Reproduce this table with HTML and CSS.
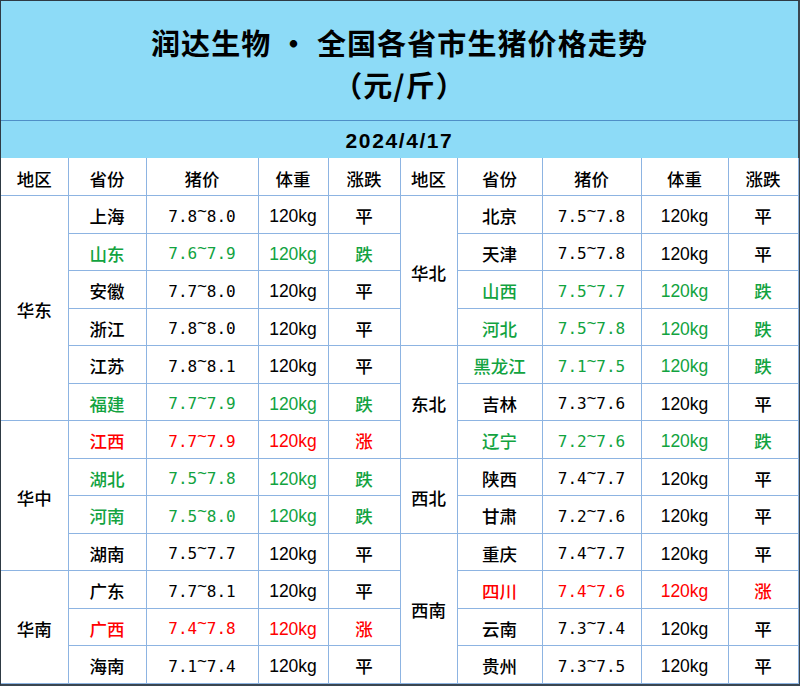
FILE: index.html
```html
<!DOCTYPE html>
<html lang="zh-CN">
<head>
<meta charset="utf-8">
<title>润达生物 · 全国各省市生猪价格走势</title>
<link rel="stylesheet" href="styles.css">
</head>
<body>
<div class="frame">
  <div class="title">
    <div class="t1">润达生物 · 全国各省市生猪价格走势</div>
    <div class="t2">（元/斤）</div>
  </div>
  <div class="date">2024/4/17</div>
  <table class="grid">
    <colgroup>
      <col class="c-reg"><col class="c-prov"><col class="c-price"><col class="c-wt"><col class="c-chg">
      <col class="c-reg2"><col class="c-prov2"><col class="c-price2"><col class="c-wt2"><col class="c-chg2">
    </colgroup>
    <thead>
      <tr>
        <th>地区</th><th>省份</th><th>猪价</th><th>体重</th><th>涨跌</th>
        <th>地区</th><th>省份</th><th>猪价</th><th>体重</th><th>涨跌</th>
      </tr>
    </thead>
    <tbody>
      <tr>
        <td class="reg" rowspan="6">华东</td>
        <td>上海</td><td class="num">7.8<span class="tl">~</span>8.0</td><td class="kg">120kg</td><td>平</td>
        <td class="reg" rowspan="4">华北</td>
        <td>北京</td><td class="num">7.5<span class="tl">~</span>7.8</td><td class="kg">120kg</td><td class="last">平</td>
      </tr>
      <tr>
        <td class="g">山东</td><td class="num g">7.6<span class="tl">~</span>7.9</td><td class="kg g">120kg</td><td class="g">跌</td>
        <td>天津</td><td class="num">7.5<span class="tl">~</span>7.8</td><td class="kg">120kg</td><td class="last">平</td>
      </tr>
      <tr>
        <td>安徽</td><td class="num">7.7<span class="tl">~</span>8.0</td><td class="kg">120kg</td><td>平</td>
        <td class="g">山西</td><td class="num g">7.5<span class="tl">~</span>7.7</td><td class="kg g">120kg</td><td class="g last">跌</td>
      </tr>
      <tr>
        <td>浙江</td><td class="num">7.8<span class="tl">~</span>8.0</td><td class="kg">120kg</td><td>平</td>
        <td class="g">河北</td><td class="num g">7.5<span class="tl">~</span>7.8</td><td class="kg g">120kg</td><td class="g last">跌</td>
      </tr>
      <tr>
        <td>江苏</td><td class="num">7.8<span class="tl">~</span>8.1</td><td class="kg">120kg</td><td>平</td>
        <td class="reg" rowspan="3">东北</td>
        <td class="g">黑龙江</td><td class="num g">7.1<span class="tl">~</span>7.5</td><td class="kg g">120kg</td><td class="g last">跌</td>
      </tr>
      <tr>
        <td class="g">福建</td><td class="num g">7.7<span class="tl">~</span>7.9</td><td class="kg g">120kg</td><td class="g">跌</td>
        <td>吉林</td><td class="num">7.3<span class="tl">~</span>7.6</td><td class="kg">120kg</td><td class="last">平</td>
      </tr>
      <tr>
        <td class="reg" rowspan="4">华中</td>
        <td class="r">江西</td><td class="num r">7.7<span class="tl">~</span>7.9</td><td class="kg r">120kg</td><td class="r">涨</td>
        <td class="g">辽宁</td><td class="num g">7.2<span class="tl">~</span>7.6</td><td class="kg g">120kg</td><td class="g last">跌</td>
      </tr>
      <tr>
        <td class="g">湖北</td><td class="num g">7.5<span class="tl">~</span>7.8</td><td class="kg g">120kg</td><td class="g">跌</td>
        <td class="reg" rowspan="2">西北</td>
        <td>陕西</td><td class="num">7.4<span class="tl">~</span>7.7</td><td class="kg">120kg</td><td class="last">平</td>
      </tr>
      <tr>
        <td class="g">河南</td><td class="num g">7.5<span class="tl">~</span>8.0</td><td class="kg g">120kg</td><td class="g">跌</td>
        <td>甘肃</td><td class="num">7.2<span class="tl">~</span>7.6</td><td class="kg">120kg</td><td class="last">平</td>
      </tr>
      <tr>
        <td>湖南</td><td class="num">7.5<span class="tl">~</span>7.7</td><td class="kg">120kg</td><td>平</td>
        <td class="reg" rowspan="4">西南</td>
        <td>重庆</td><td class="num">7.4<span class="tl">~</span>7.7</td><td class="kg">120kg</td><td class="last">平</td>
      </tr>
      <tr>
        <td class="reg" rowspan="3">华南</td>
        <td>广东</td><td class="num">7.7<span class="tl">~</span>8.1</td><td class="kg">120kg</td><td>平</td>
        <td class="r">四川</td><td class="num r">7.4<span class="tl">~</span>7.6</td><td class="kg r">120kg</td><td class="r last">涨</td>
      </tr>
      <tr>
        <td class="r">广西</td><td class="num r">7.4<span class="tl">~</span>7.8</td><td class="kg r">120kg</td><td class="r">涨</td>
        <td>云南</td><td class="num">7.3<span class="tl">~</span>7.4</td><td class="kg">120kg</td><td class="last">平</td>
      </tr>
      <tr>
        <td>海南</td><td class="num">7.1<span class="tl">~</span>7.4</td><td class="kg">120kg</td><td>平</td>
        <td>贵州</td><td class="num">7.3<span class="tl">~</span>7.5</td><td class="kg">120kg</td><td class="last">平</td>
      </tr>
    </tbody>
  </table>
</div>
</body>
</html>
```

FILE: styles.css
```css
html, body {
  margin: 0;
  padding: 0;
  background: #ffffff;
}

.frame {
  width: 800px;
  height: 686px;
  box-sizing: border-box;
  border-top: 1px solid #2e3a44;
  border-left: 1px solid #2e3a44;
  border-right: 2px solid #3a4650;
  border-bottom: 2px solid #3a4650;
  display: flex;
  flex-direction: column;
  background: #ffffff;
  font-family: "Noto Sans CJK SC", "Noto Sans", sans-serif;
  color: #000000;
}

.title {
  height: 120px;
  flex: 0 0 auto;
  box-sizing: border-box;
  padding-top: 5px;
  background: #8ddbf7;
  border-bottom: 1px solid #4f8fc7;
  display: flex;
  flex-direction: column;
  justify-content: center;
  align-items: center;
  font-size: 29px;
  font-weight: 700;
  letter-spacing: 1.1px;
}

.t1,
.t2 {
  height: 42px;
  line-height: 42px;
}

.date {
  height: 37px;
  flex: 0 0 auto;
  box-sizing: border-box;
  padding-top: 2px;
  background: #8ddbf7;
  display: flex;
  align-items: center;
  justify-content: center;
  font-family: "Liberation Sans", Arial, sans-serif;
  font-weight: 700;
  font-size: 21px;
  letter-spacing: 1.6px;
}

.grid {
  flex: 0 0 auto;
  width: 797px;
  border-collapse: collapse;
  table-layout: fixed;
}

.grid tr {
  height: 37.5px;
}

.c-reg { width: 67px; }
.c-prov { width: 78px; }
.c-price { width: 112px; }
.c-wt { width: 70px; }
.c-chg { width: 72px; }
.c-reg2 { width: 57px; }
.c-prov2 { width: 85px; }
.c-price2 { width: 99px; }
.c-wt2 { width: 87px; }
.c-chg2 { width: 70px; }

.grid th,
.grid td {
  border: 1px solid #8db4e2;
  padding: 4px 0 0;
  text-align: center;
  vertical-align: middle;
  font-size: 17.5px;
  font-weight: 500;
  line-height: 20px;
  white-space: nowrap;
}

.grid th {
  border-top: none;
}

.grid tr > :first-child {
  border-left: none;
}

.grid td.num {
  font-family: "DejaVu Sans Mono", monospace;
  font-size: 16px;
  font-weight: 400;
}

.tl {
  display: inline-block;
  vertical-align: 0.35em;
  line-height: 10px;
}

.grid td.kg {
  font-family: "Liberation Sans", Arial, sans-serif;
  font-size: 17.5px;
  font-weight: 400;
}

.grid td.g {
  color: #12a33f;
}

.grid td.r {
  color: #ff0000;
}
```
